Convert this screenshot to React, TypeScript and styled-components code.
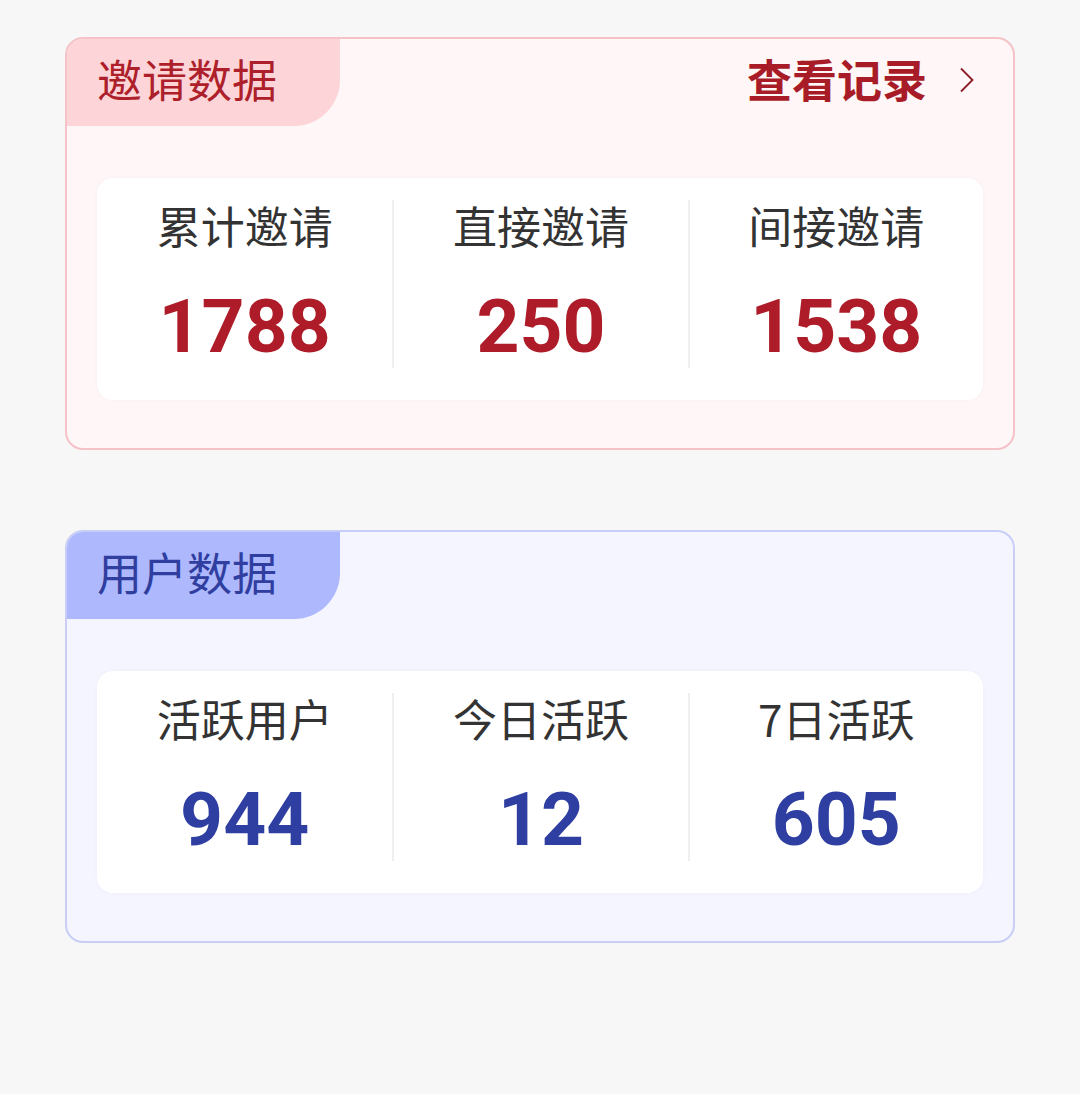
import React from "react";
import styled, { createGlobalStyle } from "styled-components";

type Stat = { label: string; value: number };

interface Tone {
	border: string;
	bg: string;
	tab: string;
	title: string;
	number: string;
}

const red: Tone = {
	border: "#f5c2c8",
	bg: "#fef6f7",
	tab: "#fdd5d9",
	title: "#ad1f2b",
	number: "#ad1c28",
};

const blue: Tone = {
	border: "#c9cef7",
	bg: "#f4f5fe",
	tab: "#adb8fd",
	title: "#2f3e9f",
	number: "#2e3ea1",
};

const inviteStats: Stat[] = [
	{ label: "累计邀请", value: 1788 },
	{ label: "直接邀请", value: 250 },
	{ label: "间接邀请", value: 1538 },
];

const userStats: Stat[] = [
	{ label: "活跃用户", value: 944 },
	{ label: "今日活跃", value: 12 },
	{ label: "7日活跃", value: 605 },
];

const Global = createGlobalStyle`
	html, body {
		margin: 0;
		padding: 0;
		background: #f7f7f7;
		font-family: "Noto Sans CJK SC", "Noto Sans", sans-serif;
	}
`;

const Page = styled.div`
	display: flex;
	flex-direction: column;
	gap: 80px;
	padding: 37px 65px 150px;
	min-height: 1094px;
	box-sizing: border-box;
`;

const Card = styled.section<{ $tone: Tone }>`
	border: 2px solid ${(p) => p.$tone.border};
	background: ${(p) => p.$tone.bg};
	border-radius: 18px;
	overflow: hidden;
	padding-bottom: 48px;
`;

const Header = styled.div`
	display: flex;
	justify-content: space-between;
	align-items: stretch;
	height: 87px;
	margin-bottom: 52px;
`;

const Tab = styled.div<{ $tone: Tone }>`
	display: flex;
	align-items: center;
	width: 273px;
	box-sizing: border-box;
	padding: 0 0 9px 30px;
	background: ${(p) => p.$tone.tab};
	border-bottom-right-radius: 46px;
	color: ${(p) => p.$tone.title};
	font-size: 45px;
`;

const RecordLink = styled.a`
	display: flex;
	align-items: center;
	gap: 32px;
	padding: 0 38px 9px 0;
	color: #a81c28;
	font-size: 45px;
	font-weight: 700;
	text-decoration: none;
	cursor: pointer;

	> svg {
		width: 16px;
		height: 26px;
		margin-top: 4px;
	}
`;

const Panel = styled.div`
	display: grid;
	grid-template-columns: repeat(3, 1fr);
	margin: 0 30px;
	padding: 16px 0 21px;
	background: #ffffff;
	border-radius: 16px;
	box-shadow: 0 0 4px rgba(0, 0, 0, 0.03);
`;

const Cell = styled.div`
	display: flex;
	flex-direction: column;
	align-items: center;
	border-left: 2px solid #efefef;
	margin: 6px 0 11px;

	&:first-child {
		border-left: none;
	}
`;

const Label = styled.div`
	color: #333333;
	font-size: 44px;
	line-height: 62px;
	margin-top: -6px;
`;

const Value = styled.div<{ $color: string }>`
	color: ${(p) => p.$color};
	font-family: Roboto, "Liberation Sans", sans-serif;
	font-weight: 700;
	font-size: 75px;
	line-height: 106px;
	margin: 17px 0 -11px;
`;

const Chevron = () => (
	<svg viewBox="0 0 16 26" fill="none">
		<path d="M2 1.5 L13.5 13 L2 24.5" stroke="#8c1d29" strokeWidth="1.8" />
	</svg>
);

const StatCard: React.FC<{
	title: string;
	tone: Tone;
	stats: Stat[];
	withLink?: boolean;
}> = ({ title, tone, stats, withLink }) => (
	<Card $tone={tone}>
		<Header>
			<Tab $tone={tone}>{title}</Tab>
			{withLink && (
				<RecordLink>
					查看记录
					<Chevron />
				</RecordLink>
			)}
		</Header>
		<Panel>
			{stats.map((s) => (
				<Cell key={s.label}>
					<Label>{s.label}</Label>
					<Value $color={tone.number}>{s.value}</Value>
				</Cell>
			))}
		</Panel>
	</Card>
);

export default function App() {
	return (
		<>
			<Global />
			<Page>
				<StatCard title="邀请数据" tone={red} stats={inviteStats} withLink />
				<StatCard title="用户数据" tone={blue} stats={userStats} />
			</Page>
		</>
	);
}
